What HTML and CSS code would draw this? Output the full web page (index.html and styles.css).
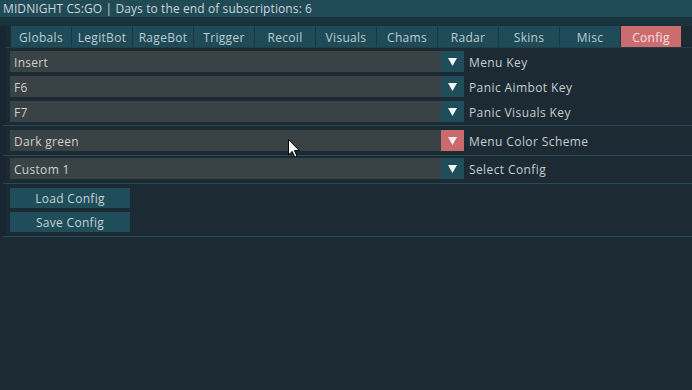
FILE: index.html
```html
<!DOCTYPE html>
<html>
<head>
<meta charset="utf-8">
<link rel="stylesheet" href="styles.css">
</head>
<body>
<div class="titlebar">MIDNIGHT CS:GO | Days to the end of subscriptions: 6</div>
<div class="subbar"></div>
<div class="main">
  <div class="tabs">
    <div class="tab">Globals</div>
    <div class="tab">LegitBot</div>
    <div class="tab">RageBot</div>
    <div class="tab">Trigger</div>
    <div class="tab">Recoil</div>
    <div class="tab">Visuals</div>
    <div class="tab">Chams</div>
    <div class="tab">Radar</div>
    <div class="tab">Skins</div>
    <div class="tab">Misc</div>
    <div class="tab active">Config</div>
  </div>
  <div class="tabline"></div>

  <div class="group g1">
    <div class="row"><div class="combo">Insert</div><div class="arrow"><svg width="9" height="8" viewBox="0 0 9 8"><polygon points="0,0 9,0 4.5,8" fill="#f2f4f5"/></svg></div><div class="label">Menu Key</div></div>
    <div class="row"><div class="combo">F6</div><div class="arrow"><svg width="9" height="8" viewBox="0 0 9 8"><polygon points="0,0 9,0 4.5,8" fill="#f2f4f5"/></svg></div><div class="label">Panic Aimbot Key</div></div>
    <div class="row"><div class="combo">F7</div><div class="arrow"><svg width="9" height="8" viewBox="0 0 9 8"><polygon points="0,0 9,0 4.5,8" fill="#f2f4f5"/></svg></div><div class="label">Panic Visuals Key</div></div>
  </div>
  <div class="sep s1"></div>

  <div class="group g2">
    <div class="row"><div class="combo">Dark green</div><div class="arrow red"><svg width="9" height="8" viewBox="0 0 9 8"><polygon points="0,0 9,0 4.5,8" fill="#f6eeee"/></svg></div><div class="label">Menu Color Scheme</div></div>
  </div>
  <div class="sep s2"></div>

  <div class="group g3">
    <div class="row"><div class="combo">Custom 1</div><div class="arrow"><svg width="9" height="8" viewBox="0 0 9 8"><polygon points="0,0 9,0 4.5,8" fill="#f2f4f5"/></svg></div><div class="label">Select Config</div></div>
  </div>
  <div class="sep s3"></div>

  <div class="group g4">
    <div class="btn">Load Config</div>
    <div class="btn">Save Config</div>
  </div>
  <div class="sep s4"></div>
</div>
<svg class="cursor" width="12" height="19" viewBox="0 0 12 19"><path d="M0.5 0.5 L0.5 16 L4.2 12.4 L6.8 18.2 L9 17.2 L6.5 11.6 L11.3 11.6 Z" fill="#ffffff" stroke="#000000" stroke-width="1"/></svg>
</body>
</html>
```

FILE: styles.css
```css
html, body {
  margin: 0;
  padding: 0;
}
body {
  width: 692px;
  height: 390px;
  background: #1b2a33;
  font-family: "Open Sans", "Noto Sans", sans-serif;
  font-size: 12px;
  color: #c4ccd0;
  position: relative;
  overflow: hidden;
}
.titlebar {
  height: 17px;
  line-height: 17px;
  background: #1f4a56;
  padding-left: 3px;
  color: #ccd5d9;
  letter-spacing: 0.1px;
}
.subbar {
  height: 9px;
  background: #19333d;
}
.main {
  display: flex;
  flex-direction: column;
  border-left: 6px solid #172630;
}
.tabs {
  display: flex;
  gap: 1px;
  margin-left: 5px;
  width: 670px;
  height: 21px;
  background: #173742;
}
.tab {
  width: 60px;
  height: 21px;
  box-sizing: border-box;
  padding-top: 2px;
  line-height: 19px;
  text-align: center;
  background: #1f4b58;
  color: #bccbd0;
  letter-spacing: 0.3px;
}
.tab.active {
  background: #cd6c6f;
  color: #f6e0e0;
}
.tabline {
  height: 1px;
  background: #213f4a;
}
.group {
  display: flex;
  flex-direction: column;
  gap: 4px;
  margin-left: 4px;
}
.g1 { margin-top: 3px; }
.g2 { margin-top: 4px; }
.g3 { margin-top: 2px; }
.g4 { margin-top: 4px; gap: 4px; }
.row {
  display: flex;
  height: 21px;
  align-items: stretch;
}
.combo {
  width: 427px;
  padding-left: 4px;
  padding-top: 2px;
  height: 19px;
  background: #394245;
  line-height: 19px;
  color: #cbd1d3;
  letter-spacing: 0.3px;
}
.arrow {
  width: 23px;
  background: #1f4d5a;
  display: flex;
  align-items: center;
  justify-content: center;
}
.arrow.red {
  background: #c96a6d;
}
.label {
  margin-left: 5px;
  padding-top: 2px;
  line-height: 19px;
  color: #c6cdd1;
  letter-spacing: 0.4px;
}
.sep {
  height: 1px;
  margin-left: -3px;
  background: #244c58;
}
.s1 { margin-top: 3px; }
.s2 { margin-top: 4px; }
.s3 { margin-top: 4px; }
.s4 { margin-top: 4px; }
.btn {
  width: 120px;
  height: 20px;
  box-sizing: border-box;
  padding-top: 1px;
  line-height: 19px;
  text-align: center;
  background: #1f4d5a;
  color: #c5d2d6;
  letter-spacing: 0.3px;
}
.cursor {
  position: absolute;
  left: 288px;
  top: 139px;
}
```
